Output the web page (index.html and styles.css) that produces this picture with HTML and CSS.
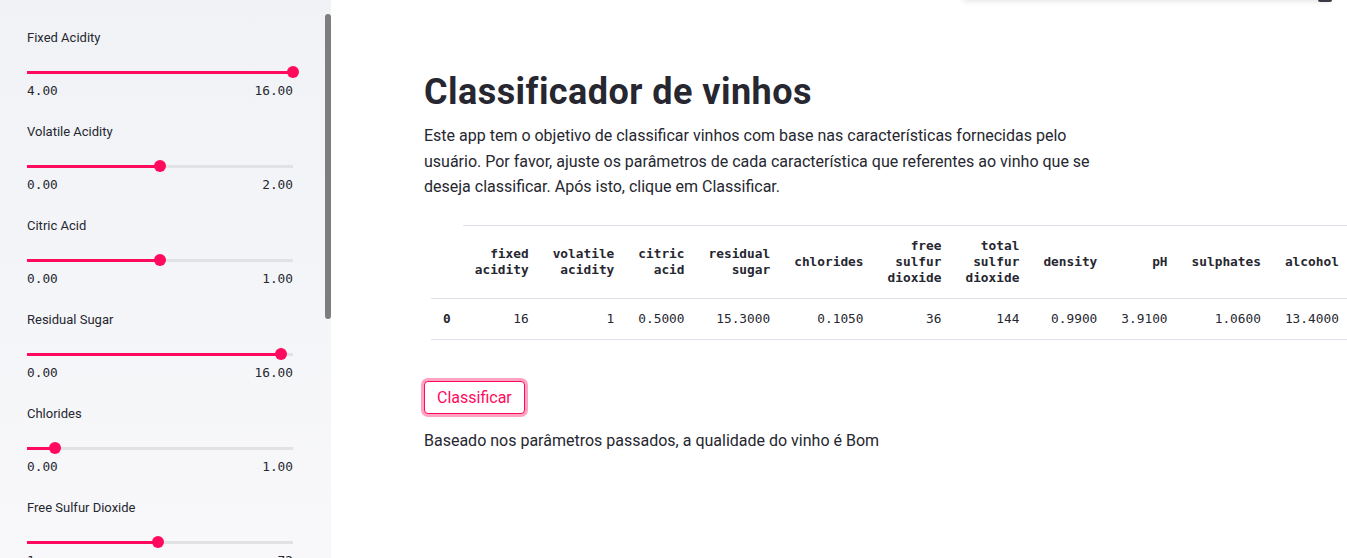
FILE: index.html
```html
<!DOCTYPE html>
<html lang="pt">
<head>
<meta charset="utf-8">
<title>Classificador de vinhos</title>
<link rel="stylesheet" href="styles.css">
</head>
<body>
<aside class="sidebar">
  <div class="sidebar-content">
    <div class="slider">
      <div class="slider-label">Fixed Acidity</div>
      <div class="rail" style="--p:100%"><span class="thumb"></span></div>
      <div class="range"><span>4.00</span><span>16.00</span></div>
    </div>
    <div class="slider">
      <div class="slider-label">Volatile Acidity</div>
      <div class="rail" style="--p:50%"><span class="thumb"></span></div>
      <div class="range"><span>0.00</span><span>2.00</span></div>
    </div>
    <div class="slider">
      <div class="slider-label">Citric Acid</div>
      <div class="rail" style="--p:50%"><span class="thumb"></span></div>
      <div class="range"><span>0.00</span><span>1.00</span></div>
    </div>
    <div class="slider">
      <div class="slider-label">Residual Sugar</div>
      <div class="rail" style="--p:95.6%"><span class="thumb"></span></div>
      <div class="range"><span>0.00</span><span>16.00</span></div>
    </div>
    <div class="slider">
      <div class="slider-label">Chlorides</div>
      <div class="rail" style="--p:10.5%"><span class="thumb"></span></div>
      <div class="range"><span>0.00</span><span>1.00</span></div>
    </div>
    <div class="slider">
      <div class="slider-label">Free Sulfur Dioxide</div>
      <div class="rail" style="--p:49.3%"><span class="thumb"></span></div>
      <div class="range"><span>1</span><span>72</span></div>
    </div>
  </div>
  <div class="scrollbar"><div class="scroll-thumb"></div></div>
</aside>
<main class="main">
  <div class="toolbar"><span class="toolbar-mark"></span></div>
  <h1 class="title">Classificador de vinhos</h1>
  <p class="intro">Este app tem o objetivo de classificar vinhos com base nas características fornecidas pelo usuário. Por favor, ajuste os parâmetros de cada característica que referentes ao vinho que se deseja classificar. Após isto, clique em Classificar.</p>
  <div class="table-wrap">
    <table class="data">
      <thead>
        <tr>
          <th class="blank"></th>
          <th>fixed<br>acidity</th>
          <th>volatile<br>acidity</th>
          <th>citric<br>acid</th>
          <th>residual<br>sugar</th>
          <th>chlorides</th>
          <th>free<br>sulfur<br>dioxide</th>
          <th>total<br>sulfur<br>dioxide</th>
          <th>density</th>
          <th>pH</th>
          <th>sulphates</th>
          <th>alcohol</th>
        </tr>
      </thead>
      <tbody>
        <tr>
          <th class="idx">0</th>
          <td>16</td>
          <td>1</td>
          <td>0.5000</td>
          <td>15.3000</td>
          <td>0.1050</td>
          <td>36</td>
          <td>144</td>
          <td>0.9900</td>
          <td>3.9100</td>
          <td>1.0600</td>
          <td>13.4000</td>
        </tr>
      </tbody>
    </table>
  </div>
  <button class="btn" type="button">Classificar</button>
  <p class="result">Baseado nos parâmetros passados, a qualidade do vinho é Bom</p>
</main>
</body>
</html>
```

FILE: styles.css
```css
* { box-sizing: border-box; }
html, body { margin: 0; padding: 0; }
body {
  display: flex;
  height: 558px;
  overflow: hidden;
  background: #fff;
  color: #262730;
  font-family: Roboto, "Noto Sans", sans-serif;
}

/* Sidebar */
.sidebar {
  width: 331px;
  flex: 0 0 331px;
  display: flex;
  background: linear-gradient(180deg, #f0f2f6 0%, #f8f8fa 100%);
}
.sidebar-content {
  width: 325px;
  padding: 28px 0 0 27px;
}
.slider {
  width: 266px;
  margin-bottom: 23px;
}
.slider-label {
  font-size: 13px;
  line-height: 20px;
  color: #262730;
}
.rail {
  position: relative;
  height: 12px;
  margin-top: 18px;
  background:
    linear-gradient(#ff0a5c, #ff0a5c) 0 50% / var(--p) 3px no-repeat,
    linear-gradient(#e2e2e4, #e2e2e4) 0 50% / 100% 3px no-repeat;
}
.thumb {
  position: absolute;
  top: 0;
  left: calc(var(--p) - 6px);
  width: 12px;
  height: 12px;
  border-radius: 50%;
  background: #ff0a5c;
}
.range {
  display: flex;
  justify-content: space-between;
  margin-top: 5px;
  font-family: "DejaVu Sans Mono", "Liberation Mono", monospace;
  font-size: 12.8px;
  line-height: 16px;
  color: #262730;
}
.scrollbar {
  width: 6px;
  padding-top: 14px;
}
.scroll-thumb {
  width: 6px;
  height: 305px;
  border-radius: 3px;
  background: #7d7d7d;
}

/* Main */
.main {
  position: relative;
  flex: 1;
  min-width: 0;
  padding: 71px 0 0 93px;
  overflow: hidden;
}
.toolbar {
  position: absolute;
  top: -40px;
  left: 632px;
  width: 369px;
  height: 40px;
  background: #fff;
  box-shadow: 0 1px 6px rgba(0, 0, 0, 0.12);
}
.toolbar-mark {
  position: absolute;
  right: 0;
  bottom: -2px;
  width: 14px;
  height: 4px;
  background: #3a3b45;
  border-radius: 0 0 2px 2px;
}
.title {
  margin: 0;
  font-size: 36px;
  line-height: 43px;
  font-weight: 700;
  color: #262730;
  letter-spacing: 0.45px;
}
.intro {
  width: 680px;
  margin: 9px 0 0;
  font-size: 16px;
  line-height: 25.6px;
}
.table-wrap {
  margin: 25px 0 0 7px;
}
.data {
  border-collapse: collapse;
  font-family: "DejaVu Sans Mono", "Liberation Mono", monospace;
  font-size: 12.8px;
  line-height: 16px;
  color: #262730;
  white-space: nowrap;
}
.data th, .data td {
  padding: 12px;
  text-align: right;
  vertical-align: middle;
}
.data thead th {
  font-weight: 700;
  border-top: 1px solid #dfe2ea;
  border-bottom: 1px solid #dfe2ea;
}
.data thead th.blank { border-top: none; }
.data tbody td, .data tbody th {
  font-weight: 400;
  border-bottom: 1px solid #dfe2ea;
}
.data tbody th.idx {
  font-weight: 700;
  text-align: left;
}
.btn {
  display: block;
  margin: 41px 0 0;
  padding: 3px 12px;
  font-family: inherit;
  font-size: 16px;
  line-height: 25px;
  color: #ff0a5c;
  background: #fff;
  border: 1px solid #ff0a5c;
  border-radius: 4px;
  box-shadow: 0 0 0 3px rgba(255, 90, 140, 0.55);
}
.result {
  margin: 14px 0 0;
  font-size: 16px;
  line-height: 25.6px;
}
```
